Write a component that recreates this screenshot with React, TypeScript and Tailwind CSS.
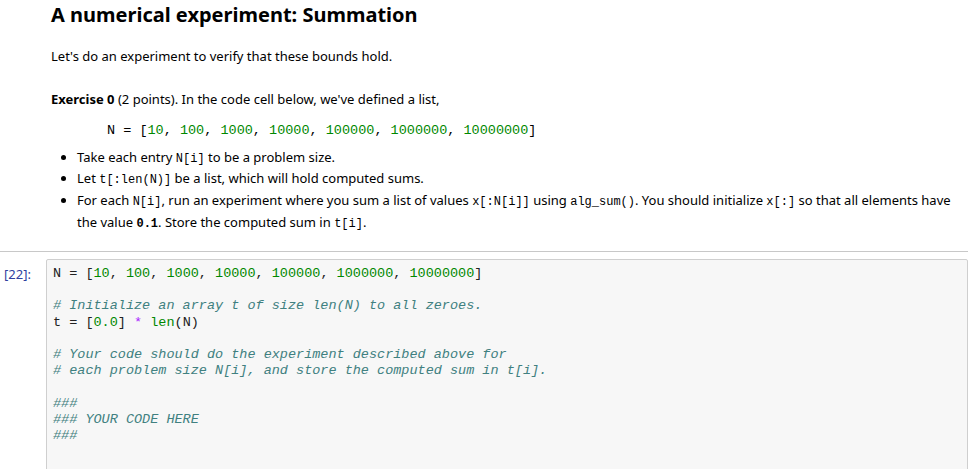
const G = ({ children }: { children: React.ReactNode }) => <span className="text-[#008800]">{children}</span>;
const C = ({ children }: { children: React.ReactNode }) => <span className="italic text-[#408080]">{children}</span>;
const M = ({ children }: { children: React.ReactNode }) => (
  <code className="font-['Liberation_Mono'] text-[12px]">{children}</code>
);

const nums = ['10', '100', '1000', '10000', '100000', '1000000', '10000000'];
const NList = () => (
  <>
    N = [
    {nums.map((n, i) => (
      <span key={n}>
        <G>{n}</G>
        {i < nums.length - 1 ? ', ' : ''}
      </span>
    ))}
    ]
  </>
);

export default function App() {
  return (
    <div className="w-[968px] h-[469px] overflow-hidden bg-white font-['Liberation_Sans'] text-[13px] text-black">
      <div className="pl-[51px] pr-4">
        <h1 className="text-[20px] font-bold leading-[24px] pt-[3px]">A numerical experiment: Summation</h1>
        <p className="mt-[20px] leading-[18px]">Let's do an experiment to verify that these bounds hold.</p>
        <p className="mt-[25px] leading-[18px]">
          <b>Exercise 0</b> (2 points). In the code cell below, we've defined a list,
        </p>
        <pre className="mt-[14px] ml-[56px] font-['Liberation_Mono'] text-[13.5px] leading-[18px]">
          <NList />
        </pre>
        <ul className="mt-[8px] ml-[26px] list-disc leading-[18px] space-y-[1px]">
          <li>Take each entry <M>N[i]</M> to be a problem size.</li>
          <li>Let <M>t[:len(N)]</M> be a list, which will hold computed sums.</li>
          <li className="leading-[20px]">
            For each <M>N[i]</M>, run an experiment where you sum a list of values <M>x[:N[i]]</M> using <M>alg_sum()</M>. You should initialize <M>x[:]</M> so that all elements have the value <M><b>0.1</b></M>. Store the computed sum in <M>t[i]</M>.
          </li>
        </ul>
      </div>
      <div className="mt-[17px] border-t border-[#c8c8c8]" />
      <div className="flex mt-[7px]">
        <div className="w-[46px] pl-[4px] pt-[7px] font-['Liberation_Mono'] text-[13px] text-[#303f9f] leading-[16px]">[22]:</div>
        <div className="flex-1 h-[240px] bg-[#f7f7f7] border border-[#cfcfcf] rounded-[2px] px-[6px] pt-[6px]">
          <pre className="font-['Liberation_Mono'] text-[13.5px] leading-[16.2px] text-[#222]">
            <NList />
            {'\n\n'}
            <C># Initialize an array t of size len(N) to all zeroes.</C>
            {'\n'}t = [<G>0.0</G>] <span className="text-[#aa22ff]">*</span> <G>len</G>(N)
            {'\n\n'}
            <C># Your code should do the experiment described above for</C>
            {'\n'}
            <C># each problem size N[i], and store the computed sum in t[i].</C>
            {'\n\n'}
            <C>###</C>
            {'\n'}
            <C>### YOUR CODE HERE</C>
            {'\n'}
            <C>###</C>
            {'\n\n\n'}
            <G>print</G>(t)
          </pre>
        </div>
      </div>
    </div>
  );
}
